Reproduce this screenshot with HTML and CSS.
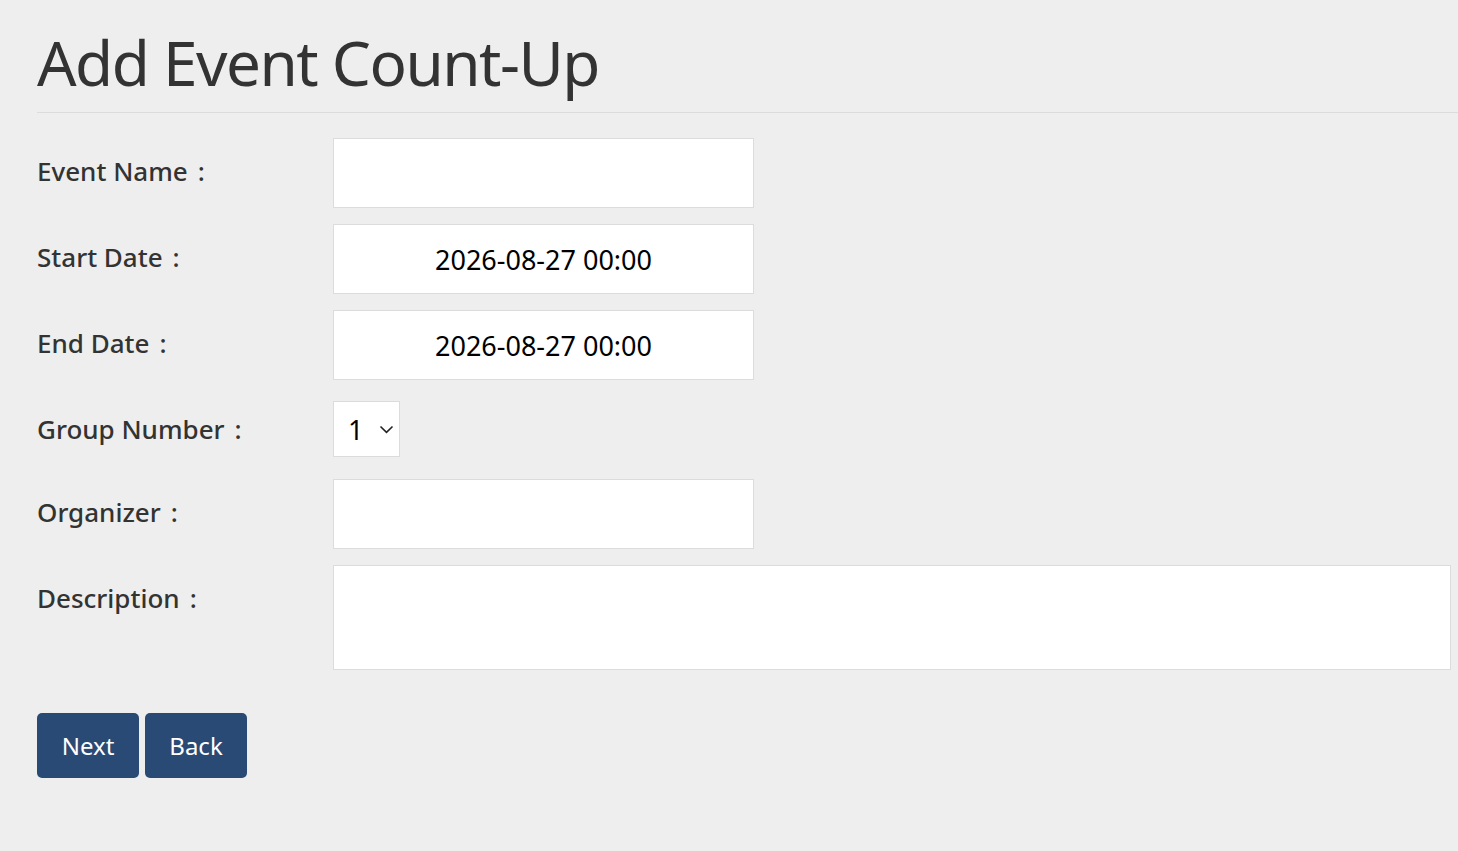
FILE: index.html
```html
<!DOCTYPE html>
<html lang="en">
<head>
<meta charset="utf-8">
<title>Add Event Count-Up</title>
<link rel="stylesheet" href="styles.css">
</head>
<body>
<div class="page">
  <header class="page-header">
    <h1 class="title">Add Event Count-Up</h1>
  </header>
  <form class="form">
    <div class="row">
      <label class="label">Event Name<span class="colon">:</span></label>
      <input class="field" type="text">
    </div>
    <div class="row">
      <label class="label">Start Date<span class="colon">:</span></label>
      <input class="field date" type="text" value="2026-08-27 00:00">
    </div>
    <div class="row">
      <label class="label">End Date<span class="colon">:</span></label>
      <input class="field date" type="text" value="2026-08-27 00:00">
    </div>
    <div class="row">
      <label class="label">Group Number<span class="colon">:</span></label>
      <div class="select">
        <span class="select-value">1</span>
        <svg class="chev" width="15" height="9" viewBox="0 0 15 9"><path d="M1.5 1.5 L7.5 7.3 L13.5 1.5" fill="none" stroke="#222" stroke-width="1.6"/></svg>
      </div>
    </div>
    <div class="row">
      <label class="label">Organizer<span class="colon">:</span></label>
      <input class="field" type="text">
    </div>
    <div class="row">
      <label class="label">Description<span class="colon">:</span></label>
      <textarea class="field area"></textarea>
    </div>
    <div class="actions">
      <button class="btn" type="button">Next</button>
      <button class="btn" type="button">Back</button>
    </div>
  </form>
</div>
</body>
</html>
```
FILE: styles.css
```css
html, body {
  margin: 0;
  background: #eeeeee;
}
body {
  font-family: "Noto Sans", "Open Sans", sans-serif;
  color: #333333;
}
.page {
  padding-left: 37px;
}
.page-header {
  border-bottom: 1px solid #dcdcdc;
  padding-top: 20px;
  padding-bottom: 8px;
}
.title {
  margin: 0;
  font-size: 62px;
  font-weight: 400;
  line-height: 84px;
  color: #333333;
  letter-spacing: -1.5px;
}
.form {
  padding-top: 25px;
}
.row {
  display: grid;
  grid-template-columns: 296px auto;
  align-items: start;
  margin-bottom: 16px;
}
.label {
  font-size: 26px;
  font-weight: 500;
  line-height: 67px;
  color: #333333;
}
.colon {
  padding-left: 10px;
}
.field {
  box-sizing: border-box;
  width: 421px;
  height: 70px;
  margin: 0;
  border: 1px solid #dcdcdc;
  background: #ffffff;
  font-family: inherit;
  font-size: 27px;
  color: #000000;
  outline: none;
  padding: 0 10px;
}
.date {
  text-align: center;
}
.select {
  box-sizing: border-box;
  width: 67px;
  height: 56px;
  margin-top: 5px;
  background: #ffffff;
  border: 1px solid #dcdcdc;
  display: flex;
  align-items: center;
  padding-left: 14px;
  gap: 16px;
}
.select-value {
  font-size: 27px;
  color: #000000;
}
.area {
  width: 1118px;
  height: 105px;
  resize: none;
}
.actions {
  display: flex;
  gap: 6px;
  padding-top: 27px;
}
.btn {
  width: 102px;
  height: 65px;
  border: none;
  border-radius: 5px;
  background: #2a4a76;
  color: #ffffff;
  font-family: inherit;
  font-size: 24px;
  padding: 0;
}
```
